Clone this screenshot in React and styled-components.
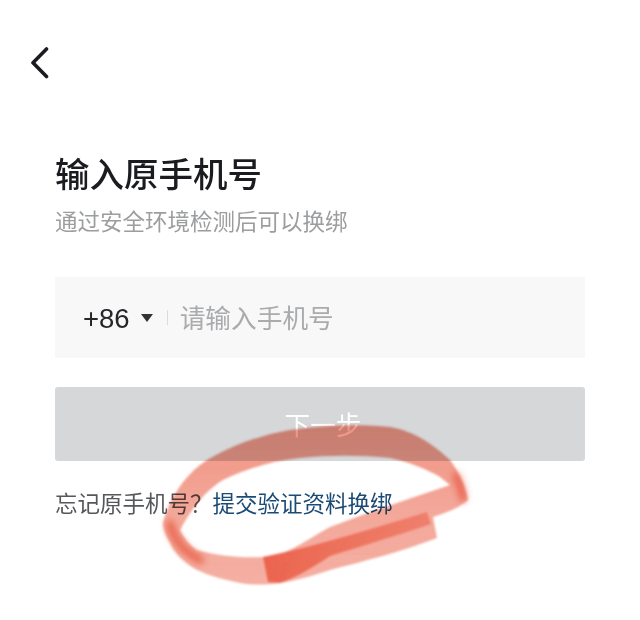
import styled, { createGlobalStyle } from "styled-components"

const GlobalStyle = createGlobalStyle`
  html, body {
    margin: 0;
    padding: 0;
    background: #fff;
    font-family: "Noto Sans CJK SC", "Noto Sans", sans-serif;
  }
`

const App = () => {
  return (
    <Page>
      <GlobalStyle />
      <BackButton aria-label="返回">
        <svg width="20" height="34" viewBox="0 0 20 34" fill="none">
          <path d="M16.5 4 L3 17.7 L16.5 31.5" stroke="#1b1c1f" strokeWidth="3.6" strokeLinecap="round" strokeLinejoin="round" />
        </svg>
      </BackButton>
      <Title>输入原手机号</Title>
      <Subtitle>通过安全环境检测后可以换绑</Subtitle>
      <PhoneField>
        <Code>+86</Code>
        <Caret />
        <Divider />
        <PhoneInput placeholder="请输入手机号" />
      </PhoneField>
      <NextButton>下一步</NextButton>
      <Forgot>
        忘记原手机号？<LinkText>提交验证资料换绑</LinkText>
      </Forgot>
      <Scribble width="640" height="620" viewBox="0 0 640 620">
        <defs>
          <filter id="soft">
            <feGaussianBlur stdDeviation="1.3" />
          </filter>
          <filter id="softer">
            <feGaussianBlur stdDeviation="3.5" />
          </filter>
          <linearGradient id="band" gradientUnits="userSpaceOnUse" x1="0" y1="430" x2="0" y2="585">
            <stop offset="0" stopColor="#e9634a" stopOpacity="0.68" />
            <stop offset="0.5" stopColor="#ea6249" stopOpacity="0.56" />
            <stop offset="1" stopColor="#ea5f45" stopOpacity="0.5" />
          </linearGradient>
          <linearGradient id="streak" gradientUnits="userSpaceOnUse" x1="263" y1="0" x2="431" y2="0">
            <stop offset="0" stopColor="#e8482e" stopOpacity="0.72" />
            <stop offset="1" stopColor="#e8482e" stopOpacity="0.42" />
          </linearGradient>
        </defs>
        <g filter="url(#soft)">
          <path
            fillRule="evenodd"
            fill="url(#band)"
            d="M163 523 C170 495 188 472 207 460 C235 444 262 435 290 430 C325 425 360 424 390 427 C415 431 435 446 450 460 C460 473 466 488 468 500 C458 509 445 513 433 517 L437 538 C400 552 365 561 330 570 C312 576 295 581 280 583 C265 585 252 585 240 583 C225 580 210 576 197 570 C183 562 174 553 170 543 C166 536 163 530 163 523 Z
               M180 530 C192 508 206 490 223 480 C248 468 272 461 300 458 C330 455 360 455 390 458 C410 462 428 470 440 477 L450 485 C410 498 370 512 330 527 C315 535 298 547 283 553 L263 557 C240 558 218 556 197 550 C190 545 184 538 180 530 Z"
          />
          <path fill="url(#streak)" d="M263 557 C320 545 375 528 427 512 L431 524 C395 536 362 546 330 556 C312 568 295 578 280 583 L268 582 Z" />
        </g>
        <g filter="url(#softer)">
          <path fill="none" stroke="#e64a30" strokeOpacity="0.7" strokeWidth="8" strokeLinecap="round" d="M170 524 C174 540 184 552 200 560" />
          <path fill="none" stroke="#e64a30" strokeOpacity="0.75" strokeWidth="7" strokeLinecap="round" d="M456 476 C460 484 462 492 463 498" />
        </g>
      </Scribble>
    </Page>
  )
}

const Page = styled.div`
  position: relative;
  width: 640px;
  height: 620px;
  box-sizing: border-box;
  padding: 45px 55px 0;
  overflow: hidden;
  background: #fff;
`

const BackButton = styled.div`
  margin-left: -25px;
  height: 34px;
  line-height: 0;
`

const Title = styled.h1`
  margin: 69px 0 0;
  font-size: 34.5px;
  line-height: 48px;
  font-weight: 500;
  color: #1b1c1f;
`

const Subtitle = styled.p`
  margin: 7px 0 0;
  font-size: 22.5px;
  line-height: 34px;
  font-weight: 400;
  color: #9b9d9f;
`

const PhoneField = styled.div`
  display: flex;
  align-items: center;
  height: 81px;
  margin-top: 40px;
  padding-left: 28px;
  background: #f8f8f9;
`

const Code = styled.span`
  padding-top: 2px;
  font-family: "Liberation Sans", sans-serif;
  font-size: 27.5px;
  color: #26272a;
`

const Caret = styled.span`
  width: 0;
  height: 0;
  margin-left: 11px;
  border-left: 6px solid transparent;
  border-right: 6px solid transparent;
  border-top: 8px solid #333;
`

const Divider = styled.span`
  width: 1px;
  height: 15px;
  margin: 0 12px 0 14px;
  background: #dcdcdc;
`

const PhoneInput = styled.input`
  flex: 1;
  min-width: 0;
  margin-top: -2px;
  padding: 0;
  border: 0;
  outline: 0;
  background: transparent;
  font-family: inherit;
  font-size: 25.7px;
  color: #26272a;
  &::placeholder {
    color: #a9abad;
    opacity: 1;
  }
`

const NextButton = styled.button`
  display: block;
  width: 100%;
  height: 74px;
  margin-top: 29px;
  padding: 0 0 2px 6px;
  border: 0;
  border-radius: 3px;
  background: #d5d7d9;
  font-family: inherit;
  font-size: 25.6px;
  color: #fff;
`

const Forgot = styled.p`
  margin: 23px 0 0;
  font-size: 22.5px;
  line-height: 36px;
  color: #55575a;
  white-space: nowrap;
`

const LinkText = styled.span`
  color: #1b4a75;
`

const Scribble = styled.svg`
  position: absolute;
  left: 0;
  top: 0;
  pointer-events: none;
  mix-blend-mode: multiply;
`

export default App
